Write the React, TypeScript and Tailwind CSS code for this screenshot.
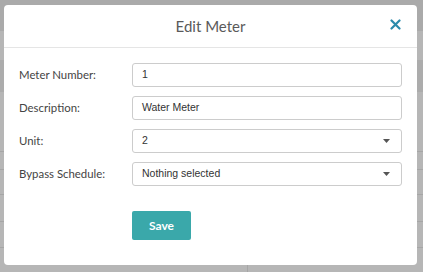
import React from 'react';

const fields = [
  { label: 'Meter Number:', value: '1', select: false },
  { label: 'Description:', value: 'Water Meter', select: false },
  { label: 'Unit:', value: '2', select: true },
  { label: 'Bypass Schedule:', value: 'Nothing selected', select: true },
];

const Caret = () => (
  <svg width="7" height="4" viewBox="0 0 7 4" className="shrink-0">
    <path d="M0 0h7L3.5 4z" fill="#555" />
  </svg>
);

export default function App() {
  return (
    <div className="relative w-[423px] h-[272px] overflow-hidden bg-[#b6b6b6]">
      {/* page behind the overlay */}
      <div className="flex flex-col h-full">
        <div className="h-[31px] bg-[#aaaaaa]" />
        <div className="h-[29px]" />
        <div className="h-[32px] bg-[#acacac]" />
        <div className="h-[59px]" />
        <div className="h-[18px] border-t border-[#a6a6a6]" />
        <div className="h-[25px] border-t border-[#a6a6a6]" />
        <div className="h-[27px] border-t border-[#a6a6a6]" />
        <div className="h-[26px] border-t border-[#a6a6a6]" />
        <div className="flex-1 border-t border-[#a6a6a6] flex">
          <div className="w-[248px] border-r border-[#a6a6a6]" />
        </div>
      </div>

      {/* modal */}
      <div className="absolute left-[4px] top-[5px] w-[413px] h-[260px] bg-white rounded-[4px] font-['Lato',sans-serif]">
        <div className="relative h-[43px] border-b border-[#e5e5e5] flex items-center justify-center">
          <h2 className="text-[15px] text-[#5a5a5a] mt-[1px]">Edit Meter</h2>
          <button className="absolute right-[16px] top-[14px] text-[#2a8aab]">
            <svg width="11" height="11" viewBox="0 0 11 11">
              <path d="M1.5 1.5l8 8M9.5 1.5l-8 8" stroke="currentColor" strokeWidth="2.2" strokeLinecap="round" />
            </svg>
          </button>
        </div>

        <div className="flex flex-col gap-[9px] pt-[15px] pl-[15px] pr-[15px]">
          {fields.map((f) => (
            <div key={f.label} className="flex items-center">
              <label className="w-[113px] text-[11.4px] text-[#444]">{f.label}</label>
              <div className="flex-1 h-[24px] border border-[#ccc] rounded-[3px] flex items-center justify-between pl-[9px] pr-[11px] font-['Liberation_Sans',sans-serif] text-[10.5px] text-[#333]">
                <span>{f.value}</span>
                {f.select && <Caret />}
              </div>
            </div>
          ))}
          <div className="pl-[113px] pt-[16px]">
            <button className="w-[59px] h-[29px] rounded-[2px] bg-[#3aa8aa] text-white text-[12px] font-bold">
              Save
            </button>
          </div>
        </div>
      </div>
    </div>
  );
}
